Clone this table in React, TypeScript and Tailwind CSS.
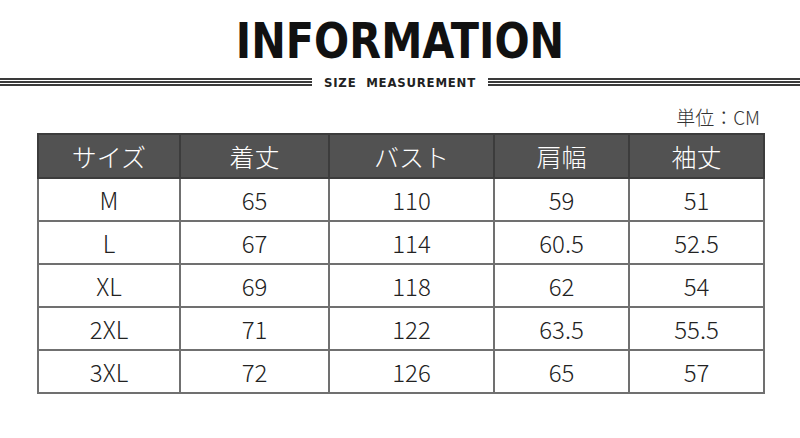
const headers = ["サイズ", "着丈", "バスト", "肩幅", "袖丈"];

const rows = [
  ["M", "65", "110", "59", "51"],
  ["L", "67", "114", "60.5", "52.5"],
  ["XL", "69", "118", "62", "54"],
  ["2XL", "71", "122", "63.5", "55.5"],
  ["3XL", "72", "126", "65", "57"],
];

const colWidths = ["w-[142px]", "w-[149px]", "w-[165px]", "w-[135px]", "w-[135px]"];

function Rule() {
  return (
    <div className="flex-1 flex flex-col gap-[1.5px]">
      <div className="h-[1.5px] bg-[#3a3a3a]" />
      <div className="h-[1.5px] bg-[#3a3a3a]" />
      <div className="h-[1.5px] bg-[#3a3a3a]" />
    </div>
  );
}

export default function App() {
  return (
    <div className="w-[800px] h-[438px] bg-white overflow-hidden flex flex-col font-['Noto_Sans_CJK_JP',sans-serif]">
      {/* Title */}
      <div className="h-[72px] pt-[9px] flex items-center justify-center">
        <h1 className="text-[46px] leading-none font-bold text-[#111] tracking-[0px] font-['DejaVu_Sans_Condensed','DejaVu_Sans',sans-serif] scale-y-[1.08]">
          INFORMATION
        </h1>
      </div>

      {/* Subtitle with rules */}
      <div className="h-[20px] flex items-center">
        <Rule />
        <div className="w-[176px] flex justify-center">
          <span className="text-[13px] leading-none font-bold text-[#222] tracking-[0.8px] font-['DejaVu_Sans_Condensed','DejaVu_Sans',sans-serif] whitespace-pre">
            SIZE  MEASUREMENT
          </span>
        </div>
        <Rule />
      </div>

      {/* Unit */}
      <div className="h-[41px] pt-[8px] pr-[40px] flex items-center justify-end">
        <span className="text-[19px] leading-none text-[#333] font-light">単位：CM</span>
      </div>

      {/* Table */}
      <div className="pl-[37px]">
        <table className="border-collapse border-2 border-[#3c3c3c] table-fixed">
          <thead>
            <tr className="h-[44px] bg-[#525252]">
              {headers.map((h, i) => (
                <th
                  key={h}
                  className={`${colWidths[i]} border-2 border-[#3c3c3c] text-white text-[25px] font-light leading-none p-0`}
                >
                  {h}
                </th>
              ))}
            </tr>
          </thead>
          <tbody>
            {rows.map((r) => (
              <tr key={r[0]} className="h-[43px]">
                {r.map((c, j) => (
                  <td
                    key={j}
                    className="border-2 border-[#707070] text-center text-[24px] font-light leading-none text-[#222] p-0"
                  >
                    {c}
                  </td>
                ))}
              </tr>
            ))}
          </tbody>
        </table>
      </div>
    </div>
  );
}
